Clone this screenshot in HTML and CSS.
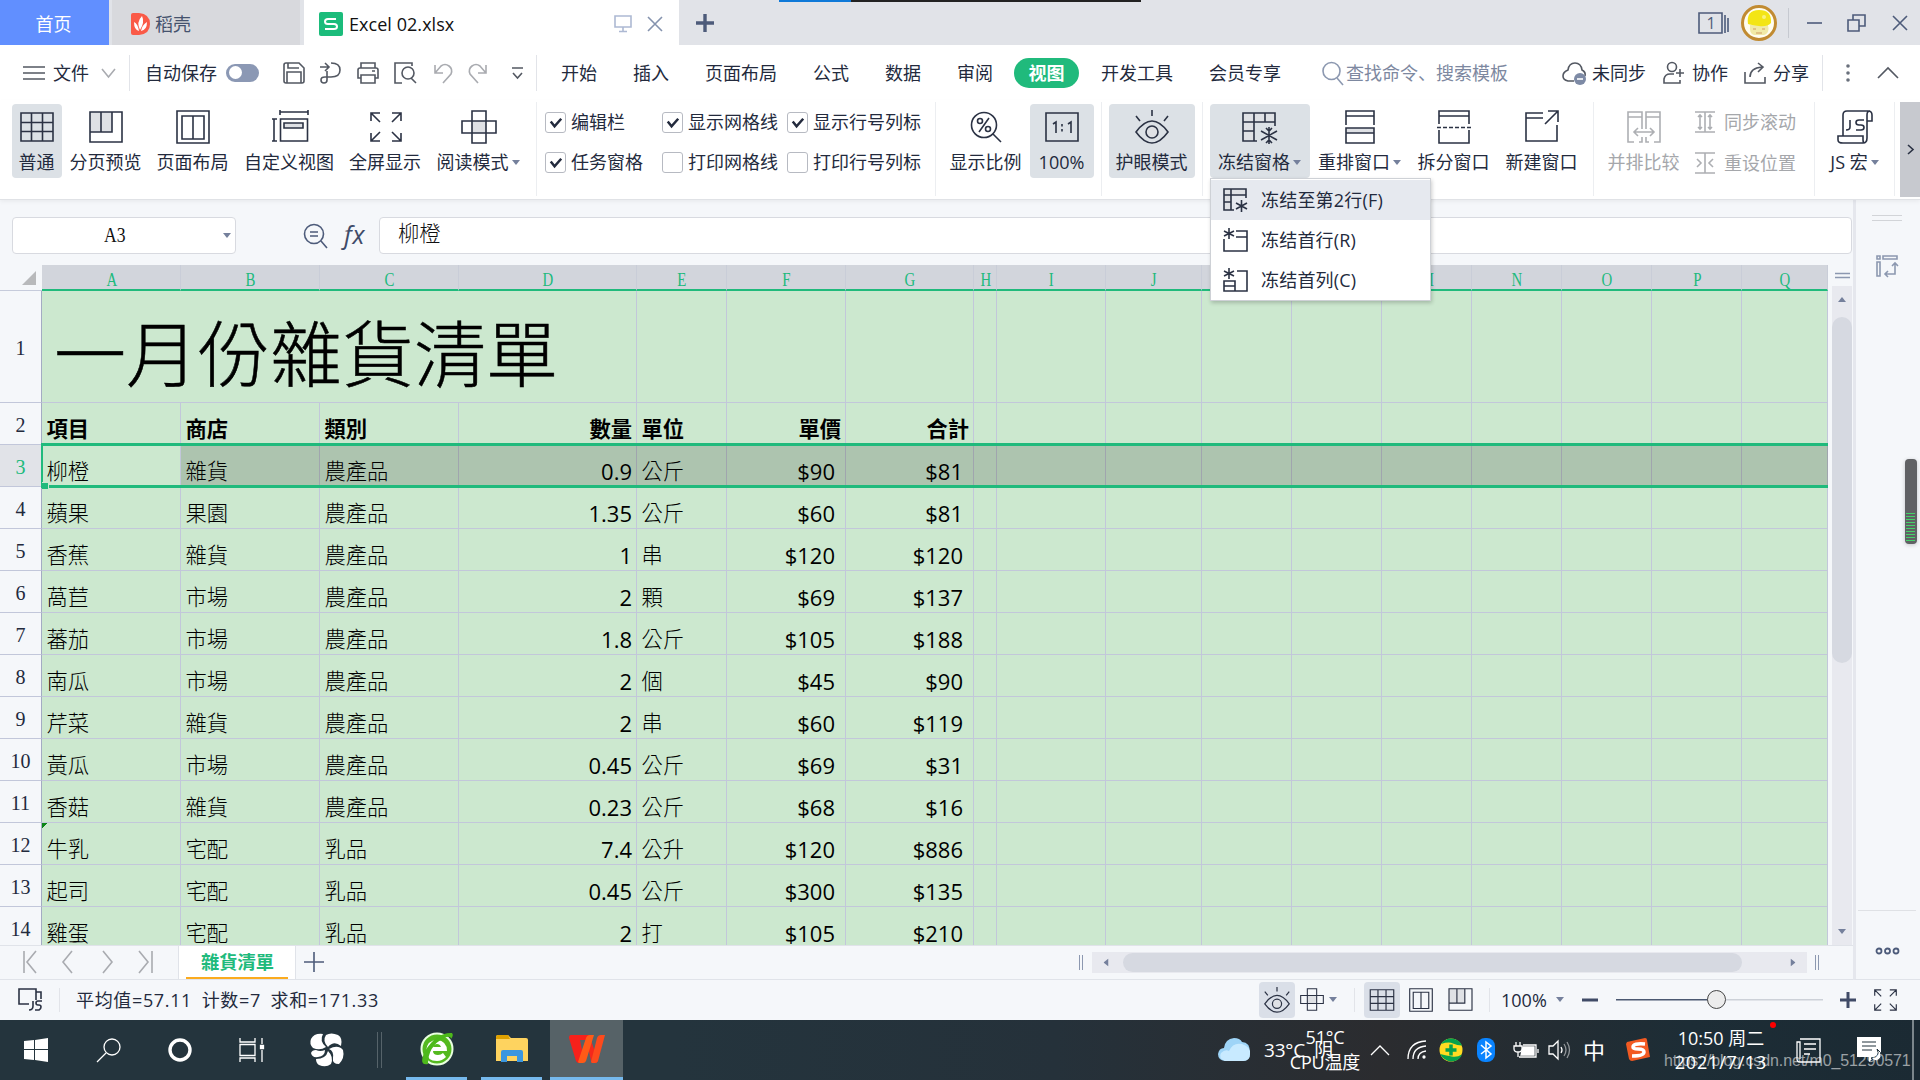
FILE: index.html
```html
<!DOCTYPE html>
<html lang="zh-CN">
<head>
<meta charset="utf-8">
<title>Excel 02.xlsx</title>
<link rel="stylesheet" href="styles.css">
</head>
<body>
<svg class="defs" aria-hidden="true">
  <symbol id="grid" viewBox="0 0 34 30"><path d="M1 1h32v28H1zM1 10.500h32M1 19.500h32M11.500 1v28M22.500 1v28"/></symbol>
  <symbol id="preview" viewBox="0 0 34 32"><path class="shade" d="M1 1h22v20H1z"/><path d="M1 1h32v30H1zM12 1v20M23 1v20H1"/></symbol>
  <symbol id="page" viewBox="0 0 34 34"><path d="M1 1h32v32H1zM6 6h22v23H6zM17 6v23"/></symbol>
  <symbol id="fullscreen" viewBox="0 0 32 30"><path d="M1 9V1h9M1 1l9 9M22 1h9v8M31 1l-9 9M1 21v8h9M1 29l9-9M22 29h9v-8M31 29l-9-9"/></symbol>
  <symbol id="cross" viewBox="0 0 36 34"><path class="shade" d="M11 11h14v12H11z"/><path d="M11 1h14v32H11zM1 11h34v12H1z"/></symbol>
  <symbol id="eye" viewBox="0 0 34 34"><path d="M1 22Q17 0 33 22Q17 44 1 22z"/><circle class="shade" cx="17" cy="22" r="6"/><circle cx="17" cy="22" r="6"/><path d="M17 0v6M1 6l4 5M33 6l-4 5"/></symbol>
  <symbol id="freeze" viewBox="0 0 36 34"><path class="shade" d="M1 3h32v9H12v19H1z"/><path d="M15 31H1V3h32v13M1 12h32M12 3v28M23 3v9M1 21h11M27 17v17M19 21l16 9M19 30l16-9M24 18l3 3 3-3M24 33l3-3 3 3"/></symbol>
  <symbol id="freeze-small" viewBox="0 0 25 24"><path class="shade" d="M1 1h22v6H8v15H1z"/><path d="M11 22H1V1h22v9M1 7h22M8 1v21M1 14h7M18.500 12v12M13 15l11 6M13 21l11-6"/></symbol>
  <symbol id="caret" viewBox="0 0 8 5"><path d="M0 0h8L4 5z"/></symbol>
  <symbol id="check" viewBox="0 0 20 20"><path d="M5 9l4 5 7-8"/></symbol>
</svg>

<div class="recorder"><i></i></div>
<header class="titlebar">
  <div class="tab home">首页</div>
  <div class="tab docer">
    <svg width="19" height="22" viewBox="0 0 19 22"><path fill="#fa5a47" d="M2 0h6q11 1 11 11t-11 11H2q-2 0-2-2V2q0-2 2-2z"/><path fill="#fff" d="M9 17Q5 9 11 3Q14 9 9 17zM8 18Q3 17 3 9Q7 11 8 18zM10 18Q11 12 16 9Q16 17 10 18z"/></svg>
    <span>稻壳</span>
  </div>
  <div class="tab current">
    <svg width="24" height="24" viewBox="0 0 24 24"><rect width="24" height="24" rx="2" fill="#1bbc7b"/><path d="M17 7H9Q6 7 6 9.500T9 12h6q3 0 3 2.500T15 17H6" fill="none" stroke="#fff" stroke-width="2"/></svg>
    <span class="filename">Excel 02.xlsx</span>
    <svg class="line pale" width="18" height="18" viewBox="0 0 18 18"><path d="M1 1h16v11H1zM9 12v4M5 16.500h8"/></svg>
    <svg class="line slate" width="16" height="16" viewBox="0 0 16 16"><path d="M1 1l14 14M15 1L1 15"/></svg>
  </div>
  <svg class="newtab" width="18" height="18" viewBox="0 0 18 18"><path d="M9 0v18M0 9h18"/></svg>
  <div class="window-tools">
    <svg class="line slate" width="31" height="22" viewBox="0 0 31 22"><path d="M1 1h23v20H1zM27 3v18M30 6v14"/><text x="8.500" y="16.500">1</text></svg>
    <svg width="36" height="36" viewBox="0 0 36 36"><circle cx="18" cy="18" r="16.500" fill="#fffdf0" stroke="#c18b32" stroke-width="3"/><path d="M9 20q-1 9 4 10h10q6-2 4-10z" fill="#f1eaa6"/><path d="M7 19Q5 5 18 5t12 13Q26 22 18 21T7 19z" fill="#f3e515"/><circle cx="23" cy="12" r="2" fill="#f9f27c"/><path d="M12 24h3M21 24h3M15 28h6" stroke="#cf9a62" fill="none"/></svg>
    <span class="vr"></span>
    <svg class="line slate" width="15" height="18" viewBox="0 0 15 18"><path d="M0 9h15"/></svg>
    <svg class="line slate" width="19" height="18" viewBox="0 0 19 18"><path d="M1 6h11v11H1zM6 6V1h12v11h-6"/></svg>
    <svg class="line slate" width="16" height="16" viewBox="0 0 16 16"><path d="M1 1l14 14M15 1L1 15"/></svg>
  </div>
</header>

<nav class="menubar">
  <svg class="line gray" width="22" height="16" viewBox="0 0 22 16"><path d="M0 2h22M0 8h22M0 14h22"/></svg>
  <span>文件</span>
  <svg class="line lite" width="15" height="10" viewBox="0 0 15 10"><path d="M1 1l6.500 8L14 1"/></svg>
  <i class="vr"></i>
  <span>自动保存</span>
  <b class="toggle"></b>
  <svg class="line gray" width="24" height="24" viewBox="0 0 24 24"><path d="M2 4q0-2 2-2h13l5 5v13q0 2-2 2H4q-2 0-2-2zM6 2v5h11M5 22V11h14v11"/></svg>
  <svg class="line gray" width="24" height="24" viewBox="0 0 24 24"><path d="M2 6h8M7 2l4 4-4 4M13 2q9 0 9 7t-9 7H7q-4 0-4 3t3 3 3-3v-9"/></svg>
  <svg class="line gray" width="24" height="24" viewBox="0 0 24 24"><path d="M5 7V2h14v5M5 17H2V9q0-2 2-2h16q2 0 2 2v8h-3M5 14h14v8H5zM16 10h3"/></svg>
  <svg class="line gray" width="24" height="24" viewBox="0 0 24 24"><path d="M9 22H2V2h17v3M18 17l5 5"/><circle cx="15" cy="12" r="6"/></svg>
  <svg class="line lite" width="24" height="24" viewBox="0 0 24 24"><path d="M4 4v8h8M4 12L10 5q4-3 8 0t2 8l-8 9"/></svg>
  <svg class="line lite" width="24" height="24" viewBox="0 0 24 24"><path d="M20 4v8h-8M20 12L14 5q-4-3-8 0t-2 8l8 9"/></svg>
  <svg class="line gray" width="24" height="24" viewBox="0 0 24 24"><path d="M7 7h11M8 12l4.500 5 4.500-5"/></svg>
  <i class="vr"></i>
  <span>开始</span><span>插入</span><span>页面布局</span><span>公式</span><span>数据</span><span>审阅</span>
  <span class="active">视图</span>
  <span>开发工具</span><span>会员专享</span>
  <svg class="line slate2" width="24" height="26" viewBox="-1 0 24 26"><circle cx="9.500" cy="11" r="8.500"/><path d="M15 18l6 7"/></svg>
  <span class="hint">查找命令、搜索模板</span>
  <svg class="line gray" width="25" height="24" viewBox="0 0 25 24"><path d="M12 20H6q-5-1-5-5t5-6q1-7 7-7t7 7q4 2 3 6"/><circle cx="18" cy="18" r="6" fill="#7d8aa5" stroke="none"/><path d="M15 18h6" stroke="#fff"/></svg>
  <span>未同步</span>
  <svg class="line gray" width="22" height="24" viewBox="0 0 22 24"><circle cx="9" cy="6" r="4.500"/><path d="M11 13H7q-5 0-6 5v4h16v-3M17 8v8M13 12h8"/></svg>
  <span>协作</span>
  <svg class="line gray" width="23" height="24" viewBox="0 0 23 24"><path d="M1 11v11h20v-6M6 16q0-9 12-10M14 2l5 4-5 5"/></svg>
  <span>分享</span>
  <i class="vr"></i>
  <svg width="8" height="20" viewBox="0 0 8 20" fill="#69707c"><circle cx="4" cy="3" r="1.800"/><circle cx="4" cy="10" r="1.800"/><circle cx="4" cy="17" r="1.800"/></svg>
  <svg class="line gray" width="22" height="12" viewBox="0 0 22 12"><path d="M1 11L11 1l10 10"/></svg>
</nav>

<section class="ribbon">
  <div class="tool on"><svg class="line" width="34" height="34"><use href="#grid"/></svg><span>普通</span></div>
  <div class="tool"><svg class="line" width="34" height="34"><use href="#preview"/></svg><span>分页预览</span></div>
  <div class="tool"><svg class="line" width="34" height="34"><use href="#page"/></svg><span>页面布局</span></div>
  <div class="tool"><svg class="line" width="36" height="34" viewBox="0 0 36 34"><path d="M8 2h28M8 0v5M36 0v5M2 9v22M0 9h5M0 31h5M8.500 9h27v22h-27z"/><path class="shade" d="M12 13h19v5H12z"/><path d="M12 13h19v5H12z"/></svg><span>自定义视图</span></div>
  <div class="tool"><svg class="line" width="32" height="34"><use href="#fullscreen"/></svg><span>全屏显示</span></div>
  <div class="tool"><svg class="line" width="36" height="34"><use href="#cross"/></svg><span>阅读模式<svg class="caret"><use href="#caret"/></svg></span></div>
  <i class="vr"></i>
  <div class="checks">
    <label><svg class="box"><use href="#check"/></svg>编辑栏</label>
    <label><svg class="box"><use href="#check"/></svg>显示网格线</label>
    <label><svg class="box"><use href="#check"/></svg>显示行号列标</label>
    <label><svg class="box"><use href="#check"/></svg>任务窗格</label>
    <label><svg class="box"></svg>打印网格线</label>
    <label><svg class="box"></svg>打印行号列标</label>
  </div>
  <i class="vr"></i>
  <div class="tool"><svg class="line" width="32" height="34" viewBox="0 0 32 34"><circle cx="14" cy="15" r="12.500"/><path d="M23 24l8 8M19 8L9 22"/><circle cx="10" cy="11" r="2.500"/><circle cx="18" cy="19" r="2.500"/></svg><span>显示比例</span></div>
  <div class="tool on"><svg class="line" width="34" height="34" viewBox="0 0 34 34"><path d="M1 3h32v28H1zM8 14l3-2v11M23 14l3-2v11M17 14v2.500M17 19v2.500"/></svg><span>100%</span></div>
  <i class="vr"></i>
  <div class="tool on"><svg class="line" width="34" height="34"><use href="#eye"/></svg><span>护眼模式</span></div>
  <i class="vr"></i>
  <div class="tool on"><svg class="line" width="36" height="34"><use href="#freeze"/></svg><span>冻结窗格<svg class="caret"><use href="#caret"/></svg></span></div>
  <div class="tool"><svg class="line" width="30" height="34" viewBox="0 0 30 34"><path class="shade" d="M1 18h28v5H1z"/><path d="M1 15V1h28v14M1 6h28M1 18h28v15H1zM1 23h28"/></svg><span>重排窗口<svg class="caret"><use href="#caret"/></svg></span></div>
  <div class="tool"><svg class="line" width="34" height="34" viewBox="0 0 34 34"><path d="M2 14V1h30v13M2 6h30M2 20v13h30V20"/><path d="M0 17.500h34" stroke-dasharray="4 2"/></svg><span>拆分窗口</span></div>
  <div class="tool"><svg class="line" width="34" height="34" viewBox="0 0 34 34"><path d="M18 3H1v28h31V15M1 8h17M20 14L33 1M23 1h10v11"/></svg><span>新建窗口</span></div>
  <i class="vr"></i>
  <div class="tool dim"><svg class="line" width="34" height="34" viewBox="0 0 34 34"><path d="M7 32H1V2h14v17M1 7h14M27 32h6V2H19v17M19 7h14M12 32h3v-5M22 32h-3v-5M7 22h20M11 18l-4 4 4 4M23 18l4 4-4 4"/></svg><span>并排比较</span></div>
  <div class="pair dim">
    <div><svg class="line" width="20" height="22" viewBox="0 0 20 22"><path d="M0 1h20M0 21h20M5 4v14M15 4v14M3 6l2-2 2 2M13 6l2-2 2 2M3 16l2 2 2-2M13 16l2 2 2-2M10 1v20"/></svg>同步滚动</div>
    <div><svg class="line" width="20" height="22" viewBox="0 0 20 22"><path d="M0 1h20M0 21h20M10 1v20M2 7l4 4-4 4M18 7l-4 4 4 4"/></svg>重设位置</div>
  </div>
  <i class="vr"></i>
  <div class="tool"><svg class="line" width="34" height="34" viewBox="0 0 34 34"><path d="M5 26V5q0-4 4-4h21q4 0 4 4v6h-5V5q0-4 3-4M29 11v17q0 5-4 5H5q-5 0-5-3v-4h25v4q0 3 2 3M12 10v7q0 3-4 3M26 10h-5q-3 0-3 2.500t3 2.500h2q3 0 3 2.500T23 20h-5"/></svg><span>JS 宏<svg class="caret"><use href="#caret"/></svg></span></div>
  <i class="vr end"></i>
  <div class="more"><svg class="line" width="7" height="11" viewBox="0 0 7 11"><path d="M1 1l5 4.500L1 10"/></svg></div>
</section>

<div class="workspace">
  <main class="book">
    <div class="formula">
      <div class="namebox"><span>A3</span><svg class="caret"><use href="#caret"/></svg></div>
      <svg class="line slate" width="25" height="26" viewBox="0 0 25 26"><circle cx="11" cy="11" r="9.500"/><path d="M18 18l6 7M7 9h8M7 13h8"/></svg>
      <em>fx</em>
      <div class="input">柳橙</div>
    </div>
    <div class="gridarea">
      <div class="sheet">
        <table>
          <colgroup><col class="c42"><col class="c139"><col class="c139"><col class="c139"><col class="c178"><col class="c90"><col class="c119"><col class="c128"><col class="c23"><col class="c109"><col class="c96"><col class="c90"><col class="c90"><col class="c90"><col class="c90"><col class="c90"><col class="c90"><col class="c86"></colgroup>
          <thead><tr><th class="corner"><i></i></th><th><b>A</b></th><th><b>B</b></th><th><b>C</b></th><th><b>D</b></th><th><b>E</b></th><th><b>F</b></th><th><b>G</b></th><th><b>H</b></th><th><b>I</b></th><th><b>J</b></th><th><b>K</b></th><th><b>L</b></th><th><b>M</b></th><th><b>N</b></th><th><b>O</b></th><th><b>P</b></th><th><b>Q</b></th></tr></thead>
          <tbody lang="zh-TW">
            <tr class="title"><th>1</th><td colspan="4">一月份雜貨清單</td><td></td><td></td><td></td><td></td><td></td><td></td><td></td><td></td><td></td><td></td><td></td><td></td><td></td></tr>
            <tr class="head"><th>2</th><td>項目</td><td>商店</td><td>類別</td><td>數量</td><td>單位</td><td>單價</td><td>合計</td><td></td><td></td><td></td><td></td><td></td><td></td><td></td><td></td><td></td><td></td></tr>
            <tr class="picked"><th>3</th><td>柳橙</td><td>雜貨</td><td>農產品</td><td>0.9</td><td>公斤</td><td>$90</td><td>$81</td><td></td><td></td><td></td><td></td><td></td><td></td><td></td><td></td><td></td><td></td></tr>
            <tr><th>4</th><td>蘋果</td><td>果園</td><td>農產品</td><td>1.35</td><td>公斤</td><td>$60</td><td>$81</td><td></td><td></td><td></td><td></td><td></td><td></td><td></td><td></td><td></td><td></td></tr>
            <tr><th>5</th><td>香蕉</td><td>雜貨</td><td>農產品</td><td>1</td><td>串</td><td>$120</td><td>$120</td><td></td><td></td><td></td><td></td><td></td><td></td><td></td><td></td><td></td><td></td></tr>
            <tr><th>6</th><td>萵苣</td><td>市場</td><td>農產品</td><td>2</td><td>顆</td><td>$69</td><td>$137</td><td></td><td></td><td></td><td></td><td></td><td></td><td></td><td></td><td></td><td></td></tr>
            <tr><th>7</th><td>蕃茄</td><td>市場</td><td>農產品</td><td>1.8</td><td>公斤</td><td>$105</td><td>$188</td><td></td><td></td><td></td><td></td><td></td><td></td><td></td><td></td><td></td><td></td></tr>
            <tr><th>8</th><td>南瓜</td><td>市場</td><td>農產品</td><td>2</td><td>個</td><td>$45</td><td>$90</td><td></td><td></td><td></td><td></td><td></td><td></td><td></td><td></td><td></td><td></td></tr>
            <tr><th>9</th><td>芹菜</td><td>雜貨</td><td>農產品</td><td>2</td><td>串</td><td>$60</td><td>$119</td><td></td><td></td><td></td><td></td><td></td><td></td><td></td><td></td><td></td><td></td></tr>
            <tr><th>10</th><td>黃瓜</td><td>市場</td><td>農產品</td><td>0.45</td><td>公斤</td><td>$69</td><td>$31</td><td></td><td></td><td></td><td></td><td></td><td></td><td></td><td></td><td></td><td></td></tr>
            <tr><th>11</th><td>香菇</td><td>雜貨</td><td>農產品</td><td>0.23</td><td>公斤</td><td>$68</td><td>$16</td><td></td><td></td><td></td><td></td><td></td><td></td><td></td><td></td><td></td><td></td></tr>
            <tr class="flagged"><th>12</th><td>牛乳</td><td>宅配</td><td>乳品</td><td>7.4</td><td>公升</td><td>$120</td><td>$886</td><td></td><td></td><td></td><td></td><td></td><td></td><td></td><td></td><td></td><td></td></tr>
            <tr><th>13</th><td>起司</td><td>宅配</td><td>乳品</td><td>0.45</td><td>公斤</td><td>$300</td><td>$135</td><td></td><td></td><td></td><td></td><td></td><td></td><td></td><td></td><td></td><td></td></tr>
            <tr><th>14</th><td>雞蛋</td><td>宅配</td><td>乳品</td><td>2</td><td>打</td><td>$105</td><td>$210</td><td></td><td></td><td></td><td></td><td></td><td></td><td></td><td></td><td></td><td></td></tr>
          </tbody>
        </table>
        <div class="selection"></div>
      </div>
      <div class="vscroll">
        <svg class="line slate2 split" width="15" height="5" viewBox="0 0 15 5"><path d="M0 .5h15M0 4.500h15"/></svg>
        <div class="vtrack"><svg class="caret up"><use href="#caret"/></svg><i></i><svg class="caret"><use href="#caret"/></svg></div>
      </div>
    </div>
    <div class="sheetbar">
      <svg class="line lite" width="130" height="24" viewBox="0 0 130 24"><path d="M1 1v22M13 1L4 12l9 11M49 1l-9 11 9 11M80 1l9 11-9 11M116 1l9 11-9 11M129 1v22"/></svg>
      <div class="sheettab" lang="zh-TW"><span>雜貨清單</span></div>
      <svg class="line slate" width="20" height="20" viewBox="0 0 20 20"><path d="M10 0v20M0 10h20"/></svg>
      <div class="grip"></div>
      <div class="htrack"><svg class="caret left"><use href="#caret"/></svg><i></i><svg class="caret right"><use href="#caret"/></svg></div>
      <div class="grip"></div>
    </div>
  </main>
  <aside class="side">
    <i class="handle"></i>
    <svg class="line slate2" width="23" height="23" viewBox="0 0 23 23"><path d="M1 1h3v3H1zM7 1h14v3H7zM1 7h3v14H1zM19 9v10H9M16 11l3-3 3 3M12 16l-3 3 3 3"/></svg>
    <div class="options"><svg class="line slate" width="25" height="8" viewBox="0 0 25 8"><circle cx="4" cy="4" r="2.500"/><circle cx="12.500" cy="4" r="2.500"/><circle cx="21" cy="4" r="2.500"/></svg></div>
  </aside>
</div>

<footer class="status">
  <svg class="line" width="25" height="23" viewBox="0 0 25 23"><path d="M11 16H1V1h17v11M18 4h5v5M23 9v2M11 22q4 0 4-4v-5M24 13h-4q-2 0-2 2t2 2h1q2 0 2 2t-2 3h-4"/></svg>
  <i class="vr"></i>
  <span class="sums">平均值=57.11&ensp;计数=7&ensp;求和=171.33</span>
  <div class="on"><svg class="line" width="26" height="26"><use href="#eye"/></svg></div>
  <svg class="line" width="24" height="23"><use href="#cross"/></svg>
  <svg class="caret"><use href="#caret"/></svg>
  <i class="vr"></i>
  <div class="on"><svg class="line" width="26" height="22"><use href="#grid"/></svg></div>
  <svg class="line" width="24" height="24"><use href="#page"/></svg>
  <svg class="line" width="25" height="23"><use href="#preview"/></svg>
  <i class="vr"></i>
  <span class="pct">100%</span>
  <svg class="caret"><use href="#caret"/></svg>
  <svg class="bold" width="16" height="16" viewBox="0 0 16 16"><path d="M0 8h16"/></svg>
  <div class="slider"><i></i></div>
  <svg class="bold" width="16" height="16" viewBox="0 0 16 16"><path d="M8 0v16M0 8h16"/></svg>
  <svg class="line" width="23" height="22"><use href="#fullscreen"/></svg>
</footer>

<footer class="taskbar">
  <svg width="24" height="24" viewBox="0 0 24 24" fill="#fff"><path d="M0 3l10-1v9H0zM11 2l13-2v11H11zM0 12h10v10L0 21zM11 12h13v12l-13-2z"/></svg>
  <svg class="white" width="25" height="25" viewBox="0 0 25 25"><circle cx="16" cy="9" r="8"/><path d="M10 15L1 24"/></svg>
  <svg class="white ring" width="24" height="24" viewBox="0 0 24 24"><circle cx="12" cy="12" r="10"/></svg>
  <svg class="white" width="26" height="24" viewBox="0 0 26 24"><path d="M1 0v4h15V0M1 6.500h15v11H1zM1 24v-4h15v4M23 0v6M23 12v12"/><path d="M21.500 7.500h3v3h-3z" fill="#fff"/></svg>
  <svg width="34" height="34" viewBox="0 0 34 34"><g fill="#fff"><path d="M16 14Q10 18 3 15Q-1 11 1 6Q4 0 13 1Q9 8 16 14z"/><path d="M18 14Q12 8 16 2Q21-1 28 2Q33 5 31 13Q24 7 18 14z"/><path d="M19 16Q28 11 33 17Q35 25 29 31Q22 31 23 25Q24 18 19 16z"/><path d="M18 18Q24 24 21 31Q16 35 9 32Q6 30 6 26Q16 26 18 18z"/><path d="M15 17Q15 23 8 24Q2 25 1 20Q2 17 6 17Q10 19 15 17z"/></g></svg>
  <i class="double"></i>
  <div class="app running"><svg width="34" height="34" viewBox="0 0 34 34"><circle cx="17" cy="17" r="15.500" fill="#54b91f" stroke="#e9ffe0" stroke-width="2"/><path d="M25 19H13q0 4 5 4 3 0 5-2l3 4q-4 4-9 4-10 0-11-10Q7 8 17 8q10 1 10 11zM13 15h8q-1-3-4-3t-4 3z" fill="#fff" fill-rule="evenodd"/><path d="M8 32Q-2 34 5 19Q17 0 32 1Q34 3 31 7Q31 3 24 6Q8 14 8 32z" fill="#4db91b"/></svg></div>
  <div class="app running"><svg width="32" height="28" viewBox="0 0 32 28"><path d="M0 2q0-2 2-2h10l3 3h15q2 0 2 2v21H0z" fill="#fed35f"/><path d="M0 3q0-3 2-3h10l2 4H0z" fill="#dfa100"/><path d="M5 27V17q0-2 2-2h18q2 0 2 2v10h-6v-6H11v6z" fill="#3b96df"/></svg></div>
  <div class="app running front"><svg width="36" height="28" viewBox="0 0 36 28"><path d="M2 0h20v5H11l4 20q-1 3-3 3h-2q-2 0-3-2L0 3q0-3 2-3z" fill="#f7211b"/><path d="M19 12l3-7 7 21q-1 2-3 2h-2q-2 0-2-2z" fill="#f5281b"/><path d="M9 27L17 3q1-3 4-3h4l-8 26q-1 2-3 2h-4z" fill="#ff5a17"/><path d="M22 27L28 3q1-3 4-3h4l-7 26q-1 2-3 2h-3z" fill="#fd4a1c"/></svg></div>
  <div class="tray">
    <svg width="33" height="24" viewBox="0 0 33 24"><path d="M7 23Q0 22 0 16q1-6 6-6Q7 1 16 0q6 0 8 4 8 0 8 11 0 8-7 8z" fill="#9ed4f7"/><path d="M7 23Q0 20 3 15q4-4 8-2Q15 4 24 6q9 3 8 10 0 7-7 7z" fill="#c8eaff"/></svg>
    <div class="weather"><span>33°C&ensp;阴</span><p>51°C<br>CPU温度</p></div>
    <svg class="white" width="20" height="12" viewBox="0 0 20 12"><path d="M1 11l9-9 9 9"/></svg>
    <svg class="white" width="20" height="20" viewBox="0 0 20 20"><path d="M1 19Q1 2 19 1M6 19Q6 7 19 6M11 19q0-7 8-8"/><circle cx="17" cy="17" r="1" fill="#fff"/></svg>
    <svg width="24" height="24" viewBox="0 0 24 24"><circle cx="12" cy="12" r="11.500" fill="#ffdb22"/><path d="M2 6Q6 0 13 .5q7 .5 10 7-5 0-9-2T2 6zM1 16q4 7 11 7.500 8 0 11-7-5 3-10 2T1 16z" fill="#05a24c"/><path d="M12 6.500v11M6.500 12h11" stroke="#05a24c" stroke-width="3.500"/></svg>
    <svg width="18" height="24" viewBox="0 0 18 24"><rect width="18" height="24" rx="8" fill="#0a84ff"/><path d="M4 7l10 9-5 4V4l5 4-10 8" fill="none" stroke="#fff" stroke-width="1.500"/></svg>
    <svg class="white" width="26" height="18" viewBox="0 0 26 18"><path d="M3 1v4M7 1v4M1 5h8v3q0 3-4 3t-4-3zM5 11v5M10 4h13v12H6M25 8v4"/><path d="M10 6h11v8H8z" fill="#fff"/></svg>
    <svg class="white" width="23" height="20" viewBox="0 0 23 20"><path d="M1 6h4l5-5v18l-5-5H1zM13 7q2 3 0 6"/><path d="M16 4q4 6 0 12M19 2q5 8 0 16" opacity=".5"/></svg>
    <b>中</b>
    <svg width="24" height="24" viewBox="0 0 24 24"><path d="M1 4L19 0q2 0 2 2l3 17-18 4q-2 0-3-2L0 6z" fill="#f25a22"/><path d="M19 6Q7 5 7 9q0 2 5 2 6 0 6 3 0 4-12 4" fill="none" stroke="#fff" stroke-width="3.500"/></svg>
    <div class="clock">10:50 周二<br><span>2021/7/13</span><i></i></div>
    <svg class="white" width="25" height="25" viewBox="0 0 25 25"><path d="M4 1h20v23H4q-3 0-3-3V4h3v17M8 6h12M8 11h12M8 16h6"/></svg>
    <svg width="24" height="26" viewBox="0 0 24 26"><path d="M0 0h24v20h-7l-5 5v-5H0z" fill="#fff"/><path d="M5 5h14M5 9h14M5 13h10" stroke="#20303a"/><path d="M20 12q4 8-6 9 6 6 10-1 1-5-4-8z" fill="#fff" stroke="#20303a"/></svg>
    <i class="peek"></i>
  </div>
</footer>

<div class="menu">
  <div class="hover"><svg class="line" width="25" height="24"><use href="#freeze-small"/></svg>冻结至第2行(F)</div>
  <div><svg class="line" width="25" height="24" viewBox="0 0 25 24"><path d="M1 11v12h23V3H13M13 9h11M6 0v11M1 3l10 5M1 8l10-5"/></svg>冻结首行(R)</div>
  <div><svg class="line" width="25" height="24" viewBox="0 0 25 24"><path d="M14 3h10v20H1V13h11v10M1 18h11M6 0v11M1 3l10 5M1 8l10-5"/></svg>冻结首列(C)</div>
</div>
<div class="meter"></div>
<div class="watermark">https://blog.csdn.net/m0_51290571</div>
</body>
</html>
```

FILE: styles.css
```css
* { box-sizing: border-box; }
body {
  margin: 0;
  width: 1920px;
  height: 1080px;
  overflow: hidden;
  display: flex;
  flex-direction: column;
  background: #f5f7fa;
  color: #232a3d;
  font: 18px/24px "Open Sans", "Noto Sans CJK SC", sans-serif;
  white-space: nowrap;
}
svg { display: block; flex: none; overflow: visible; }
.defs { position: absolute; width: 0; height: 0; }
.line { fill: none; stroke: #2b3244; stroke-width: 1.6; }
.line text { fill: #4d5b7a; stroke: none; font-size: 16px; }
.slate { stroke: #4d5b7a; }
.slate2 { stroke: #8c98b0; }
.pale { stroke: #adb9d3; }
.gray { stroke: #535862; }
.lite { stroke: #a9abb0; }
.shade { fill: #dfe1e5; stroke: none; }
.caret { width: 8px; height: 5px; fill: #75809c; stroke: none; }
.vr { width: 1px; background: #e2e4e9; }

/* title bar */
.recorder { position: absolute; left: 779px; top: 0; width: 362px; height: 2px; background: #222; }
.recorder i { display: block; width: 72px; height: 2px; background: #0f79d8; }
.titlebar { flex: none; height: 45px; display: flex; align-items: center; background: #e1e3e8; }
.tab { height: 45px; display: flex; align-items: center; padding-top: 3px; }
.home { width: 109px; padding-right: 2px; justify-content: center; background: #618fff; color: #fff; }
.docer { width: 188px; margin: 0 4px 0 3px; padding-left: 19px; gap: 5px; background: #d8d9dd; color: #45526d; }
.current { width: 371px; padding-left: 15px; gap: 6px; background: #fff; color: #111; box-shadow: 4px 0 #fff; }
.filename { width: 259px; letter-spacing: .05px; }
.current .pale { margin-right: 9px; }
.current .slate { stroke: #8593ae; }
.newtab { margin-left: 21px; stroke: #4d5b7a; stroke-width: 3.4; }
.window-tools { margin-left: auto; display: flex; align-items: center; padding-right: 12px; }
.window-tools > :nth-child(2) { margin-left: 12px; }
.window-tools .vr { height: 30px; margin: 0 18px 0 11px; background: #c6c9d0; }
.window-tools > :nth-child(5) { margin: 0 26px 0 25px; }

/* menu bar */
.menubar {
  flex: none;
  height: 55px;
  padding-left: 23px;
  display: grid;
  align-items: center;
  background: #fff;
  grid-template-columns: 30px 48px 28px 16px 81px 56px 36px 38px 37px 38px 35px 39px 31px 25px 72px 72px 108px 72px 72px 57px 87px 108px 112px 25px 216px 30px 71px 29px 52px 29px 49px 22px 33px 22px;
}
.menubar .vr { height: 36px; }
.toggle { width: 33px; height: 18px; border-radius: 9px; background: #8b98b4; }
.toggle::before { content: ""; display: block; width: 13px; height: 13px; margin: 2px 3px; border-radius: 50%; background: #fff; }
.menubar .active { width: 65px; height: 30px; line-height: 30px; border-radius: 15px; text-align: center; background: #20ba7c; color: #fff; font-weight: 700; }
.hint { color: #7d88a0; }

/* ribbon */
.ribbon {
  flex: none;
  position: relative;
  height: 100px;
  padding: 2px 0 2px 12px;
  display: grid;
  background: #fff;
  border-bottom: 1px solid #e0e2e6;
  box-shadow: 0 2px 4px #0000000c;
  grid-template-columns: 50px 88px 86px 107px 85px 101px 14px 385px 14px 88px 64px 15px 86px 15px 100px 100px 88px 88px 14px 88px 119px 14px 68px 11px 20px;
}
.ribbon > .vr { height: 94px; justify-self: center; background: #eceef1; }
.tool { height: 74px; margin-top: 2px; padding-top: 5px; border-radius: 4px; display: flex; flex-direction: column; align-items: center; gap: 5px; }
.tool > .line { height: 36px; padding: 1px 0; }
.tool span { display: flex; align-items: center; gap: 3px; margin-right: 1px; }
.on { background: #dce1e6; }
.on .shade { fill: #c7cbd4; }
.checks { padding: 0 0 0 2px; height: 80px; display: grid; grid-template-columns: 117px 125px auto; }
.checks label { display: flex; align-items: center; gap: 5px; }
.box { width: 21px; height: 21px; border: 1.5px solid #b7bac2; border-radius: 3px; fill: none; stroke: #232a3d; stroke-width: 2.6; }
.dim { color: #a5a7ab; }
.dim .line { stroke: #adafb3; }
.pair { padding-left: 7px; height: 81px; display: grid; }
.pair div { display: flex; align-items: center; gap: 9px; }
.more { height: 95px; display: grid; place-items: center; background: #c7c9cf; }

/* workspace */
.workspace { flex: none; height: 780px; display: flex; }
.book { width: 1853px; }
.formula { height: 65px; padding: 17px 1px 11px 12px; display: flex; align-items: center; }
.namebox { width: 224px; height: 37px; padding: 0 4px 0 91px; display: flex; align-items: center; justify-content: space-between; background: #fff; border: 1px solid #d8dae0; border-radius: 4px; color: #111; font: 20px "Liberation Serif", serif; }
.namebox span { display: inline-block; transform: scaleX(.88); transform-origin: left; }
.formula > .line { margin-left: 67px; }
.formula em { width: 35px; margin: 0 0 4px 16px; color: #3f4b68; font: italic 25px "Open Sans", sans-serif; letter-spacing: .6px; }
.input { flex: 1; height: 37px; padding: 1px 18px; border: 1px solid #d8dae0; border-radius: 4px; background: #fff; color: #111; font-size: 21.3px; font-weight: 300; line-height: 28px; }
.gridarea { height: 680px; display: flex; }
.sheet { position: relative; width: 1828px; overflow: hidden; }
table { width: 1828px; table-layout: fixed; border-collapse: separate; border-spacing: 0; color: #000; }
.c42 { width: 42px; } .c139 { width: 139px; } .c178 { width: 178px; } .c90 { width: 90px; } .c119 { width: 119px; }
.c128 { width: 128px; } .c23 { width: 23px; } .c109 { width: 109px; } .c96 { width: 96px; } .c86 { width: 86px; }
thead th { height: 26px; padding: 0 0 0 1px; background: #d2d5dc; border-right: 1px solid #c9cdd8; border-bottom: 2px solid #20ba7c; color: #20ba7c; font: 19px/18px "Liberation Serif", serif; vertical-align: bottom; }
thead b { display: inline-block; font-weight: 400; transform: scaleX(.78); }
thead .corner { padding: 0; background: #f5f7fa; border-right: 0; border-bottom: 1px solid #c6cbdb; }
.corner i { display: block; width: 14px; height: 14px; margin: 0 0 5px 22px; background: #b8b9bb; clip-path: polygon(100% 0, 100% 100%, 0 100%); }
tbody tr { height: 42px; }
tbody td, tbody th { height: 42px; padding: 0 4px 1px 4.500px; overflow: hidden; vertical-align: bottom; border: 0 solid #c2c7da; border-width: 0 1px 1px 0; }
tbody td { background: #cce8cf; font: 300 21.3px/28px "Open Sans", "Noto Sans CJK TC", sans-serif; }
tbody th { padding: 3px 0 0 0; border-right-color: #a3abc3; color: #232a3d; font: 20px "Liberation Serif", serif; vertical-align: middle; text-align: center; }
tbody td:nth-child(5), tbody td:nth-child(7), tbody td:nth-child(8) { text-align: right; font-weight: 400; font-size: 22px; }
tbody td:nth-child(7), tbody td:nth-child(8) { padding-right: 10px; }
.title { height: 112px; }
.title td:nth-child(2) { height: 112px; padding: 12px 0 0 12px; vertical-align: middle; font-size: 72px; line-height: 98px; -webkit-text-stroke: .5px #000; }
.title th { padding-top: 4px; }
.head td:nth-child(n) { font-weight: 700; font-size: 21.3px; padding-right: 4px; }
.picked th { background: #e1e3e8; color: #20ba7c; }
.picked td:nth-child(n+3) { background: #adc4af; border-right-color: #a0a5ae; }
.flagged td:nth-child(2) { background: linear-gradient(135deg, #0b8517 4px, transparent 4px) #cce8cf; }
.selection { position: absolute; left: 41px; top: 178px; width: 1800px; height: 45px; border: 3px solid #20ba7c; border-left-width: 2px; }
.selection::after { content: ""; position: absolute; left: -1px; bottom: -4px; width: 6px; height: 6px; background: #20ba7c; border: 1px solid #cce8cf; border-width: 1px 1px 0 0; }
.vscroll { width: 25px; padding: 8px 1px 0 4px; }
.split { margin: 0 3px 8px; }
.vtrack { height: 659px; padding: 11px 1px; display: flex; flex-direction: column; align-items: center; justify-content: space-between; background: #e8e9ef; }
.vtrack i { width: 20px; height: 346px; margin: 15px 0 auto; border-radius: 10px; background: #d6d9e1; }
.up { transform: rotate(180deg); }

.sheetbar { height: 35px; padding-bottom: 1px; display: flex; align-items: center; border: 1px solid #e0e3e9; border-width: 1px 0; }
.sheetbar > .line:first-child { margin: 0 25px 0 23px; }
.sheettab { width: 118px; height: 33px; padding: 0 7px; margin: 0 8px -1px 0; background: #fff; border: 1px solid #e0e3e9; border-width: 0 1px; text-align: center; color: #20ba7c; font: 700 18.3px/24px "Noto Sans CJK TC", sans-serif; }
.sheettab span { display: block; height: 33px; padding-left: 1px; line-height: 31px; border-bottom: 2px solid #fbab1f; }
.grip { width: 4px; height: 15px; border: 1px solid #8c98b0; border-width: 0 1px; }
.sheetbar > .grip { margin-left: auto; }
.htrack { width: 715px; height: 21px; margin-left: 9px; padding: 0 10px; display: flex; align-items: center; background: #e8e9ef; }
.htrack i { width: 619px; height: 19px; margin: 0 auto 0 13px; border-radius: 10px; background: #d6d9e1; }
.left { transform: rotate(90deg); }
.right { transform: rotate(-90deg); }
.sheetbar > .grip:last-child { margin: 0 34px 0 8px; }

.side { width: 67px; padding-right: 2px; border-left: 3px solid #e5e7ed; border-bottom: 1px solid #e0e3e9; display: flex; flex-direction: column; align-items: center; }
.handle { width: 30px; height: 6px; margin-top: 15px; border: 2px solid #d2d4d8; border-width: 1.500px 0; }
.side > svg { margin-top: 34px; }
.options { width: 58px; height: 69px; margin-top: auto; padding: 36px 0 0 17px; border-top: 1px solid #dfe1e5; }
.options svg { stroke-width: 1.8; }

/* status bar */
.status {
  flex: none;
  height: 40px;
  padding-left: 18px;
  display: grid;
  align-items: center;
  grid-template-columns: 41px 17px 1183px 41px 29px 25px 10px 45px 39px 41px 12px 55px 26px 34px 224px 34px 40px;
  padding-bottom: 1px;
}
.sums { letter-spacing: .65px; }
.status .vr { height: 24px; }
.status .on { width: 36px; height: 36px; display: flex; align-items: center; justify-content: center; border-radius: 4px; background: #dadfe8; }
.bold { stroke: #404b67; stroke-width: 3; }
.slider { display: flex; align-items: center; width: 207px; height: 19px; padding-left: 91px; background: linear-gradient(90deg, #4b5871 95px, #cdd1d8 95px) center / 100% 1.500px no-repeat; }
.slider i { width: 19px; height: 19px; border-radius: 50%; background: #ececec; border: 1.500px solid #454545; }

/* taskbar */
.taskbar { flex: none; height: 60px; padding-left: 24px; display: flex; align-items: center; background: linear-gradient(90deg, #24343d 0 35%, #25313a 55%, #2b2c2f 72%, #1d2d36 88%, #1b2a33); color: #fff; }
.white { fill: none; stroke: #fff; stroke-width: 1.3; }
.ring { stroke-width: 3.4; }
.taskbar > :nth-child(2) { margin-left: 48px; }
.taskbar > :nth-child(3) { margin-left: 47px; }
.taskbar > :nth-child(4) { margin-left: 47px; }
.taskbar > :nth-child(5) { margin-left: 45px; }
.double { width: 5px; height: 36px; margin: 0 24px 0 33px; border: 1px solid #56636a; border-width: 0 1px; }
.app { height: 60px; width: 61px; display: flex; align-items: center; justify-content: center; border-bottom: 3px solid #76b9ed; }
.app + .app { margin-left: 14px; }
.app + .front { width: 73px; margin-left: 8px; background: #566267; }
.tray { margin-left: auto; width: 702px; height: 60px; display: grid; align-items: center; grid-template-columns: 46px 106px 37px 32px 38px 36px 35px 35px 43px 49px 121px 61px 55px 8px; }
.weather { position: relative; letter-spacing: -.2px; font-size: 19px; }
.weather p { position: absolute; left: 23px; top: -13px; margin: 0; width: 76px; text-align: center; font-size: 18px; line-height: 25px; }
.tray b { font-weight: 400; font-size: 22px; }
.clock { position: relative; width: 92px; text-align: center; font-size: 18px; line-height: 24px; }
.clock span { letter-spacing: .8px; margin: 0 -2px; }
.clock i { position: absolute; right: -9px; top: -4px; width: 6px; height: 6px; border-radius: 50%; background: #f00; }
.peek { width: 2px; height: 60px; background: #7b868b; }

/* floating layers */
.menu { position: absolute; left: 1210px; top: 178px; width: 221px; height: 123px; padding-top: 1px; background: #fff; border: 1px solid #ced1d6; box-shadow: 1px 2px 4px #0003; }
.menu div { height: 40px; padding-left: 12px; display: flex; align-items: center; gap: 13px; letter-spacing: .2px; }
.menu .hover { background: #e6e9ef; }
.meter { position: absolute; left: 1905px; top: 459px; width: 12px; height: 85px; border-radius: 4px; background: repeating-linear-gradient(#45d169 0 1px, transparent 1px 3px) 1px 54px / 9px 28px no-repeat #606164; box-shadow: 0 1px 4px #0003; }
.watermark { position: absolute; left: 1664px; top: 1049px; color: #ffffff90; font: 16px/24px "Liberation Sans", sans-serif; letter-spacing: -.1px; }
```
